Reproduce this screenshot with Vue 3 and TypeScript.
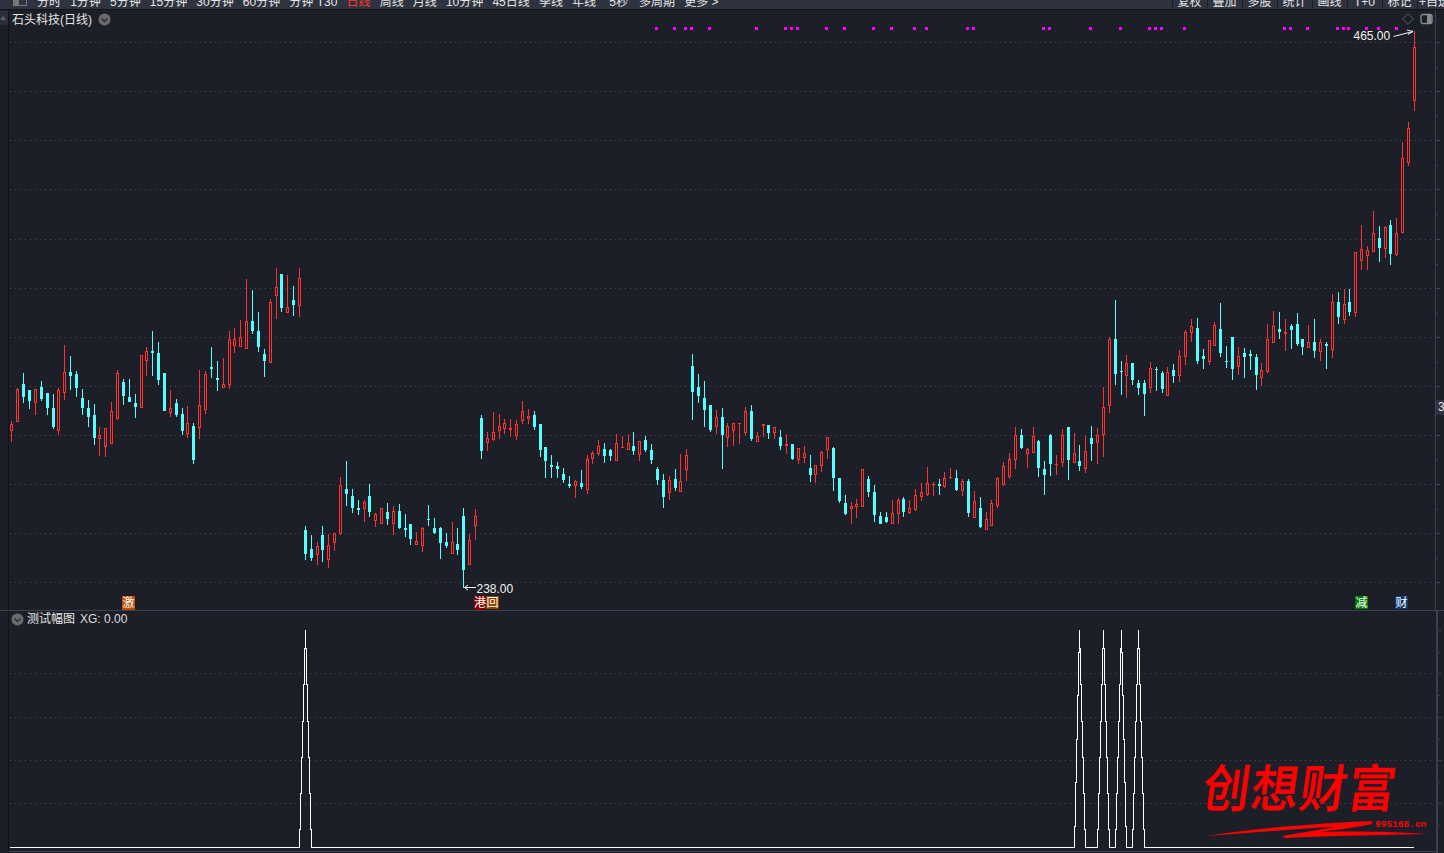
<script setup lang="ts">
interface Candle { col: number; hi: number; top: number; h: number; lo: number; up: boolean }

// readings from the chart: colour, x, high, body top, body bottom, low, each in 1/3 px from the origin
const segments = [
  { ox: 0, oy: 260, rows: `r 34 484 493 512 545,r 52 384 388 485 485,c 70 339 373 410 428,c 88 390 390 422 446,r 106 388 388 428 464,c 124 363 381 416 422,c 142 399 399 443 464,c 160 402 444 500 506,r 175 384 391 512 525,r 193 255 337 398 419,c 211 288 336 348 389,c 229 333 342 383 410,c 247 387 414 443 464,c 265 420 444 470 500,c 283 432 465 533 554,r 298 501 526 536 587,r 316 505 505 560 590,r 334 426 454 551 551,r 352 330 340 476 479,c 370 357 366 407 434,c 388 357 411 426 426,c 406 402 429 441 473,r 424 286 286 445 445,r 439 262 274 302 347,c 457 213 273 279 347,c 475 246 279 359 374,c 493 339 339 452 452,r 511 390 445 460 470,c 529 417 429 465 470,c 547 444 462 512 525,r 562 438 490 521 533,c 580 489 498 600 611,r 598 330 436 503 536,r 616 333 343 449 461,c 634 261 321 327 353,c 652 303 353 360 392,r 670 294 373 385 385,r 688 213 238 376 386,r 703 204 238 257 278,r 721 180 232 260 260,r 739 57 184 266 266,c 757 90 183 213 221,c 775 156 213 261 275,c 793 267 282 303 350,r 811 117 127 308 308,r 829 24 82 109 176,c 844 42 42 143 155,r 862 45 142 158 158,c 880 78 121 134 167,r 898 24 55 139 170` },
  { ox: 300, oy: 400, rows: `c 16 378 390 462 480,c 34 405 447 474 483,r 52 426 438 465 495,c 67 378 405 450 486,r 85 402 435 480 504,r 103 400 400 428 453,r 121 231 255 402 405,c 139 183 267 282 318,c 157 267 288 324 339,c 175 300 324 330 345,r 193 300 306 327 366,c 208 252 288 336 351,r 226 339 342 363 381,r 244 324 324 372 372,c 262 309 336 357 375,r 280 318 333 372 405,c 298 312 333 384 387,c 316 342 384 390 411,c 331 372 372 417 435,r 349 396 423 435 435,r 367 382 384 438 456,c 385 315 357 360 378,c 403 354 384 400 402,c 421 381 384 429 477,c 439 399 426 438 444,r 457 366 426 462 462,c 472 384 432 450 465,c 490 324 348 510 565,r 508 402 420 495 495,r 526 327 348 378 420,c 544 45 54 153 177,r 562 96 114 129 153,r 580 36 96 120 123,r 598 42 78 93 117,r 613 57 69 87 102,r 631 57 84 90 111,r 649 60 72 108 120,r 667 3 33 63 72,r 685 27 48 57 72,c 703 33 45 81 90,c 721 72 72 150 171,c 736 141 141 183 234,c 754 165 195 201 234,c 772 186 198 207 234,c 790 204 222 240 249,c 808 228 252 258 264,r 826 240 243 258 294,c 844 210 249 261 267,r 862 165 177 270 282,r 877 153 159 177 192,r 895 120 138 162 168,c 913 129 147 168 189,c 931 147 150 168 183,r 949 102 129 183 183` },
  { ox: 620, oy: 350, rows: `r 7 258 291 294 294,r 25 252 279 300 300,c 40 246 288 303 315,r 58 273 273 315 333,c 76 258 270 300 306,c 94 282 300 330 342,c 112 351 357 390 405,c 130 372 390 441 474,r 148 378 390 429 450,c 166 357 387 414 423,r 181 312 393 426 426,r 199 297 315 360 393,c 217 12 48 126 210,c 235 72 111 138 159,c 253 93 144 180 231,c 271 165 165 240 246,r 289 180 201 231 252,c 307 174 201 255 357,r 322 219 228 264 291,r 340 219 219 243 288,r 358 219 220 222 282,r 376 171 183 249 255,c 394 165 183 267 273,r 412 246 258 276 276,r 430 222 222 228 261,c 445 225 225 249 267,r 463 231 231 249 267,c 481 240 261 288 300,r 499 252 282 288 312,c 517 282 282 327 330,r 535 294 294 330 342,r 553 288 309 324 339,c 571 315 354 375 396,r 586 345 345 375 399,r 604 303 306 348 366,r 622 261 261 300 327,c 640 291 294 384 423,c 658 384 384 453 459,c 676 435 459 492 495,r 694 456 468 477 522,r 709 447 462 471 504,r 727 357 357 471 471,c 745 378 387 426 441,c 763 405 426 495 516,c 781 486 498 522 522,c 799 486 501 516 519,r 817 450 489 522 522,r 835 444 450 492 522,c 850 441 447 486 501,r 868 450 474 489 492,r 886 417 435 480 483,r 904 399 426 441 453,r 922 351 399 435 438,r 940 396 403 405 438,c 958 387 402 408 435,r 973 366 384 411 414,r 991 354 381 384 387,c 1009 360 384 420 423,r 1027 387 393 423 438,c 1045 387 393 489 501,r 1063 423 453 504 504,c 1081 441 474 531 534,r 1099 486 507 540 540,r 1114 450 459 528 528,r 1132 381 384 468 474,r 1150 336 348 405 408,r 1168 309 327 381 387,r 1186 231 255 330 357` },
  { ox: 1005, oy: 410, rows: `c 49 57 75 114 117,r 67 114 117 132 174,r 85 51 78 129 129,c 100 90 93 174 201,c 118 153 177 195 255,c 136 72 75 162 198,r 154 135 162 164 195,r 172 57 75 159 171,c 190 51 51 150 210,r 208 69 129 159 159,c 223 105 153 168 183,r 241 78 123 177 189,c 259 48 84 102 153,r 277 54 75 99 162,r 295 -69 -9 75 141` },
  { ox: 1000, oy: 210, rows: `r 328 381 387 587 609,c 346 270 387 492 525,c 364 453 484 486 555,r 379 435 459 498 564,c 397 459 459 510 525,c 415 510 519 534 555,c 433 510 519 552 618,r 451 456 474 534 549,c 469 471 477 480 543,c 487 483 489 537 549,r 502 471 486 558 558,c 520 462 480 498 519,r 538 420 438 498 516,r 556 360 366 441 465,r 574 327 348 369 396,c 592 324 354 453 462,c 610 417 438 447 477,r 628 390 390 456 465,r 643 336 345 408 408,c 661 279 357 429 441,c 679 408 453 456 474,c 697 381 381 477 510,r 715 411 438 471 495,c 733 414 429 441 504,c 751 420 432 438 480,c 769 432 441 495 540,r 784 459 480 503 528,r 802 342 387 486 489,r 820 303 348 399 399,c 838 306 357 366 387,r 856 327 366 372 423,c 874 342 348 360 417,c 892 309 342 402 408,c 907 387 387 411 435,r 925 345 396 414 414,c 943 327 396 423 444,r 961 387 396 426 453,c 979 396 402 408 477,r 997 252 276 420 444,c 1015 246 276 321 342,r 1033 237 282 330 342,c 1048 237 276 306 318,r 1066 127 127 308 321,r 1084 45 117 153 180,r 1102 108 120 138 180,r 1120 3 69 126 126,c 1138 48 84 114 156,r 1156 48 51 117 144,c 1171 30 45 132 165,r 1189 24 69 135 138` },
  { ox: 1355, oy: 100, rows: `r 142 126 174 400 400,r 160 66 84 188 198` },
  { ox: 1000, oy: 0, rows: `r 1243 93 142 304 333` },
]

const candles: Candle[] = segments.flatMap((s) =>
  s.rows.split(',').map((row) => {
    const [kind, u, hi, top, bot, lo] = row.split(' ')
    const py = (v: string) => s.oy + Math.round(Number(v) / 3)
    return {
      col: s.ox + Math.floor(Number(u) / 3),
      hi: py(hi),
      top: py(top),
      h: Math.max(1, py(bot) - py(top)),
      lo: py(lo),
      up: kind === 'r',
    }
  }),
)

const dots = [656, 674, 685, 691, 709, 756, 785, 791, 797, 826, 844, 873, 891, 914, 926, 967, 973, 1043, 1049, 1090, 1120, 1149, 1155, 1161, 1184, 1284, 1290, 1307, 1337, 1343, 1348, 1366, 1378, 1396]
const upperGrid = [42, 91, 140, 189, 239, 288, 337, 386, 435, 484, 533, 582]
const lowerGrid = [673, 717, 760, 803]

const upperTicks = upperGrid.flatMap((y, i) => [{ y, len: 5 }, { y: y + 25, len: 3 }].slice(0, i === 11 ? 1 : 2))
const lowerTicks = [630, 652, 673, 695, 717, 739, 760, 782, 803, 825].map((y, i) => ({ y, len: i % 2 ? 3 : 5 }))

// one line segment the way the terminal rasterises it: one vertical run per pixel column
function stair(from: number, to: number, y0: number, y1: number): string {
  const n = Math.abs(to - from)
  const dir = to > from ? 1 : -1
  let d = ''
  for (let k = 0; k <= n; k++) {
    const t = (k + 0.5) / n
    const y = k === n ? y1 : Math.round(y0 + (y1 - y0) * t)
    d += ` H${from + dir * k + 0.5} V${y}`
  }
  return d
}

const base = 847
const peak = 630
const peaks = [
  { c: 305, l: 6, r: 6 },
  { c: 1079, l: 5, r: 6 },
  { c: 1103, l: 6, r: 6 },
  { c: 1121, l: 6, r: 5 },
  { c: 1138, l: 6, r: 6 },
]
let xgPath = `M10 ${base + 0.5}`
for (const p of peaks) {
  xgPath += stair(p.c - p.l, p.c, base + 0.5, peak)
  xgPath += ` H${p.c + 0.5}` + stair(p.c, p.c + p.r, peak, base + 0.5)
}
xgPath += ' H1414'

const leftTabs = ['分时', '1分钟', '5分钟', '15分钟', '30分钟', '60分钟', '分钟 T30', '日线', '周线', '月线', '10分钟', '45日线', '季线', '年线', '5秒', '多周期', '更多 >']
const rightTabs = ['复权', '叠加', '多股', '统计', '画线', 'T+0', '标记', '+自选']
</script>

<template>
  <div class="screen">
    <header class="topbar">
      <span class="layout-icon"></span>
      <nav class="tabs">
        <span v-for="t in leftTabs" :key="t" class="tab" :class="{ on: t === '日线', wide: t === '5秒' }">{{ t }}</span>
      </nav>
      <nav class="tools">
        <span v-for="t in rightTabs" :key="t" class="tool">{{ t }}</span>
      </nav>
    </header>

    <section class="pane upper">
      <div class="rail"><span class="rail-flag"></span></div>
      <div class="plot">
        <svg class="chart" width="1426" height="600" viewBox="9 10 1426 600" shape-rendering="crispEdges">
          <line v-for="y in upperGrid" :key="y" class="grid" x1="10" x2="1434" :y1="y + 0.5" :y2="y + 0.5" />
          <rect v-for="x in dots" :key="x" :x="x - 1" y="27" width="3" height="3" fill="#ff00ff" />
          <g v-for="c in candles" :key="c.col">
            <rect :x="c.col" :y="c.hi" width="1" :height="c.lo - c.hi" :fill="c.up ? '#ff3232' : '#54ffff'" />
            <rect :x="c.col - 1" :y="c.top" width="3" :height="c.h" :fill="c.up ? '#ff3232' : '#54ffff'" />
            <rect v-if="c.up && c.h > 2" :x="c.col" :y="c.top + 1" width="1" :height="c.h - 2" fill="#1c1f27" />
          </g>
          <g class="tags">
            <rect x="122" y="596" width="13" height="14" fill="#c04a00" />
            <text x="122.5" y="607">激</text>
            <rect x="474" y="596" width="12" height="14" fill="#880000" />
            <text x="474" y="607">港</text>
            <rect x="486" y="596" width="13" height="13" fill="#8a4200" />
            <text x="486.5" y="607">回</text>
            <rect x="1355" y="596" width="13" height="13" fill="#007a00" />
            <text x="1355.5" y="607">减</text>
            <rect x="1395" y="596" width="13" height="13" fill="#0a3a70" />
            <text x="1395.5" y="607">财</text>
          </g>
          <text class="price" x="1353.5" y="40">465.00</text>
          <path class="arrow" d="M1393.5 36.5 L1413 31.5 M1407 30 L1413 31.5 L1408 34.5" shape-rendering="auto" />
          <text class="price" x="476.5" y="593">238.00</text>
          <path class="arrow" d="M476 587.5 H464.5 M468 585 L464.5 587.5 L468 590" shape-rendering="auto" />
        </svg>
        <div class="head">
          <span class="title">石头科技(日线)</span>
          <svg class="fold" width="13" height="13" viewBox="0 0 13 13"><circle cx="6.5" cy="6.5" r="6" fill="#6b6b6b" /><path d="M3.5 5.5 L6.5 8.5 L9.5 5.5" fill="none" stroke="#26282e" stroke-width="1.4" /></svg>
        </div>
        <div class="corner">
          <svg width="12" height="12" viewBox="0 0 12 12"><path d="M6 .7 L11.3 6 L6 11.3 L.7 6Z" fill="none" stroke="#5f6066" /></svg>
          <svg width="13" height="12" viewBox="0 0 13 12"><rect x="1" y="1.5" width="11" height="9" rx="2" fill="none" stroke="#8a8a8a" stroke-width="1.4" /><rect x="7" y="2" width="4.5" height="8" fill="#8a8a8a" /></svg>
        </div>
      </div>
      <div class="axis">
        <svg width="9" height="600" viewBox="1435 10 9 600" shape-rendering="crispEdges">
          <rect v-for="t in upperTicks" :key="t.y" x="1435" :y="t.y" :width="t.len" height="1" fill="#3b4150" />
        </svg>
        <span class="axis-label">3</span>
      </div>
    </section>

    <section class="pane lower">
      <div class="rail"></div>
      <div class="plot">
        <svg class="chart" width="1426" height="242" viewBox="9 611 1426 242" shape-rendering="crispEdges">
          <line v-for="y in lowerGrid" :key="y" class="grid" x1="10" x2="1434" :y1="y + 0.5" :y2="y + 0.5" />
          <path :d="xgPath" fill="none" stroke="#ffffff" stroke-width="1" />
          <line x1="9" x2="1435" y1="851.5" y2="851.5" stroke="#3b4150" />
        </svg>
        <div class="head sub">
          <svg class="fold" width="13" height="13" viewBox="0 0 13 13"><circle cx="6.5" cy="6.5" r="6" fill="#6b6b6b" /><path d="M3.5 5.5 L6.5 8.5 L9.5 5.5" fill="none" stroke="#26282e" stroke-width="1.4" /></svg>
          <span class="title">测试幅图</span>
          <span class="value">XG: 0.00</span>
        </div>
        <div class="mark">
          <span class="mark-name">创想财富</span>
          <svg class="swoosh" width="230" height="24" viewBox="1200 818 230 24"><path d="M1207 836 C1270 826 1330 823 1372 821 L1372 824 C1350 829 1330 830 1320 832 C1360 831 1400 832 1425 834 C1380 835 1320 836 1285 838 L1282 836 L1335 827 C1290 829 1250 833 1207 836Z" fill="#ff0000" /></svg>
          <span class="mark-url">995168.cn</span>
        </div>
      </div>
      <div class="axis thick">
        <svg width="9" height="242" viewBox="1435 611 9 242" shape-rendering="crispEdges">
          <rect x="1436" y="611" width="2" height="242" fill="#3b4150" />
          <rect v-for="t in lowerTicks" :key="t.y" x="1438" :y="t.y" :width="t.len - 1" height="1" fill="#3b4150" />
        </svg>
      </div>
    </section>
  </div>
</template>

<style>
html, body { background: #1c1f27; }
</style>

<style scoped>
.screen {
  width: 1444px;
  height: 853px;
  display: flex;
  flex-direction: column;
  overflow: hidden;
  background: #1c1f27;
  font-family: "Liberation Sans", "Noto Sans CJK SC", sans-serif;
  font-size: 12px;
  color: #e6e6e6;
}
.topbar {
  flex: 0 0 10px;
  box-sizing: border-box;
  display: flex;
  align-items: flex-start;
  overflow: hidden;
  background: #2f3340;
  border-bottom: 1px solid #101216;
}
.layout-icon {
  flex: none;
  width: 12px;
  height: 5px;
  margin: -1px 0 0 13px;
  border: 1px solid #777;
  background: linear-gradient(90deg, #777 40%, transparent 40%);
}
.tabs {
  display: flex;
  gap: 9.15px;
  padding-left: 10px;
  margin-top: -5px;
  line-height: 14px;
  white-space: nowrap;
}
.tab.on { color: #ff3232; }
.tab.wide { margin: 0 2px 0 4px; }
.tools {
  flex: 0 0 272px;
  min-width: 0;
  display: flex;
  margin-left: auto;
  margin-top: -5px;
  line-height: 14px;
  height: 15px;
  white-space: nowrap;
}
.tool {
  flex: none;
  width: 34px;
  margin-right: 1px;
  box-sizing: border-box;
  text-align: center;
  border-left: 1px solid #1c1f27;
}
.pane {
  display: flex;
}
.upper {
  flex: 0 0 601px;
  border-bottom: 1px solid #3b4150;
  box-sizing: border-box;
}
.lower {
  flex: 1;
}
.rail {
  flex: 0 0 9px;
  box-sizing: border-box;
  border-right: 1px solid #101216;
  position: relative;
}
.rail-flag {
  position: absolute;
  left: 0;
  top: 1px;
  width: 8px;
  height: 14px;
  background: #2a2e38;
}
.rail-flag::after {
  content: "";
  position: absolute;
  left: 0;
  top: 5px;
  border: 3px solid transparent;
  border-top: 0;
  border-bottom: 4px solid #60636b;
}
.plot {
  position: relative;
  flex: 1;
}
.chart {
  display: block;
}
.grid {
  stroke: #4a4c53;
  stroke-width: 1;
  stroke-dasharray: 1 4;
}
.tags text {
  font-size: 12px;
  fill: #ffffff;
}
.price {
  font-size: 12px;
  fill: #f2f2f2;
}
.arrow {
  fill: none;
  stroke: #f2f2f2;
  stroke-width: 1;
}
.head {
  position: absolute;
  left: 3px;
  top: 3px;
  display: flex;
  align-items: center;
  gap: 6px;
  height: 15px;
  line-height: 15px;
}
.head .fold { margin-top: -2px; }
.head.sub {
  left: 2px;
  top: 0;
  height: 16px;
  gap: 3px;
}
.head.sub .fold { margin-top: 0; }
.head .value { margin-left: 2px; color: #dcdcdc; }
.fold { flex: none; }
.corner {
  position: absolute;
  right: 3px;
  top: 3px;
  display: flex;
  align-items: center;
  gap: 6px;
}
.mark {
  position: absolute;
  left: 1190px;
  top: 151px;
  width: 238px;
  height: 84px;
  color: #ff0000;
}
.mark-name {
  display: block;
  font-size: 47px;
  font-weight: 500;
  -webkit-text-stroke: 0.6px #ff0000;
  line-height: 60px;
  letter-spacing: 1.5px;
  white-space: nowrap;
  transform: skewX(-8deg) scaleY(1.08);
  transform-origin: left bottom;
}
.swoosh {
  position: absolute;
  left: 1px;
  top: 56px;
}
.mark-url {
  position: absolute;
  left: 176px;
  top: 57px;
  font-family: "Liberation Mono", monospace;
  font-size: 9.5px;
  font-weight: 700;
  line-height: 12px;
}
.axis {
  flex: 0 0 9px;
  position: relative;
  box-sizing: border-box;
  border-left: 1px solid #3b4150;
  margin-left: -1px;
  overflow: hidden;
}
.axis svg { display: block; margin-left: -1px; }
.axis.thick { border-left-color: transparent; }
.axis-label {
  position: absolute;
  left: 0;
  top: 390px;
  width: 9px;
  height: 15px;
  line-height: 15px;
  padding-left: 2px;
  background: #2f3340;
  color: #e6e6e6;
}
</style>
